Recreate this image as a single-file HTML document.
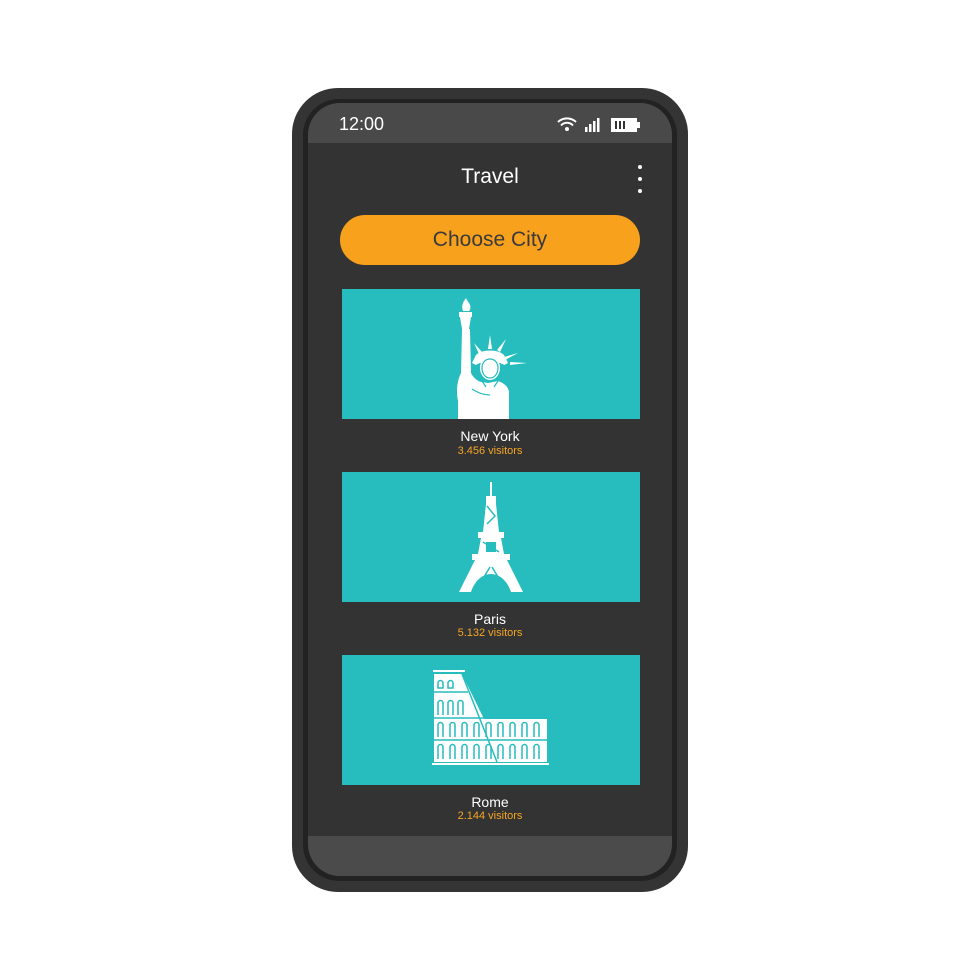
<!DOCTYPE html>
<html><head><meta charset="utf-8"><style>
body{margin:0;width:980px;height:980px;background:#fff;position:relative;font-family:"Liberation Sans",sans-serif;overflow:hidden}
.phone{position:absolute;left:292px;top:88px;width:396px;height:804px;background:#343434;border-radius:46px}
.rim{position:absolute;left:303px;top:99px;width:374px;height:782px;background:#222;border-radius:36px}
.screen{position:absolute;left:308px;top:103px;width:364px;height:773px;background:#333;border-radius:32px;overflow:hidden}
.status{position:absolute;left:0;top:0;width:364px;height:40px;background:#494949}
.bottom{position:absolute;left:0;bottom:0;width:364px;height:40px;background:#4b4b4b}
.t{position:absolute;color:#fff;text-align:center;width:364px;left:0}
.card{position:absolute;left:34px;width:298px;height:130px;background:#27bcbe}
.name{position:absolute;left:0;width:364px;text-align:center;color:#fff;font-size:14px}
.vis{position:absolute;left:0;width:364px;text-align:center;color:#f5a623;font-size:11px}
</style></head><body>
<div class="phone"></div><div class="rim"></div>
<div class="screen">
<div class="status"></div>
<div style="position:absolute;left:31px;top:11px;color:#fff;font-size:18px">12:00</div>
<svg style="position:absolute;left:248px;top:12px" width="86" height="20" viewBox="0 0 86 20">
<g fill="none" stroke="#fff" stroke-width="2"><path d="M2 7a13 13 0 0 1 18 0"/><path d="M5 10.5a8 8 0 0 1 12 0"/></g><circle cx="11" cy="14" r="2" fill="#fff"/>
<rect x="29" y="12" width="2.5" height="5" fill="#fff"/><rect x="33" y="9" width="2.5" height="8" fill="#fff"/><rect x="37" y="6" width="2.5" height="11" fill="#fff"/><rect x="41" y="3" width="2.5" height="14" fill="#fff"/>
<rect x="55" y="3" width="26" height="14" fill="#fff"/><rect x="81" y="7" width="3" height="6" fill="#fff"/>
<rect x="59" y="6" width="2" height="8" fill="#333"/><rect x="63" y="6" width="2" height="8" fill="#333"/><rect x="67" y="6" width="2" height="8" fill="#333"/>
</svg>
<div class="t" style="top:62px;font-size:21px">Travel</div>
<div style="position:absolute;left:330px;top:62px;width:4px;height:4px;border-radius:50%;background:#fff"></div>
<div style="position:absolute;left:330px;top:74px;width:4px;height:4px;border-radius:50%;background:#fff"></div>
<div style="position:absolute;left:330px;top:86px;width:4px;height:4px;border-radius:50%;background:#fff"></div>
<div style="position:absolute;left:32px;top:112px;width:300px;height:50px;border-radius:25px;background:#f8a11d;color:#3a3a3a;font-size:21px;text-align:center;line-height:50px">Choose City</div>

<div class="card" style="top:186px"><svg width="298" height="130" viewBox="0 0 298 130"><g fill="#fff">
<path d="M121 22c-2-5 0-9 3-13 1 3 3 4 4 7 1 3 0 5-1 6z"/><rect x="117" y="23" width="13" height="5"/><path d="M118 28h11l-2 12h-7z"/>
<path d="M120 40h8l1 44h-10z"/>
<path d="M148 46l2 14-4 0zM132 54l8 9-3 2zM164 50l-6 13-3-2zM176 64l-13 7-1-3zM185 74l-17 2 0-3z"/>
<path d="M134 66c6-6 22-6 28 0l4 8-4 2c-4-4-24-4-28 0l-4-2z"/>
<path d="M148 68c7 0 10 5 10 11s-4 12-10 12-10-6-10-12 3-11 10-11z"/>
<path d="M119 84h10c3 6 8 9 11 9l6 1 10-2c6 2 11 6 11 12v26h-51v-18c-2-10-1-20 3-28z"/>
</g>
<path d="M148 70c5 0 8 4 8 9s-3 10-8 10-8-5-8-10 3-9 8-9z" fill="none" stroke="#27bcbe" stroke-width="1.2"/>
<path d="M140 92l4 6M156 92l-4 6M130 100c6 4 12 6 18 6" fill="none" stroke="#27bcbe" stroke-width="1.2"/></svg></div>
<div class="name" style="top:325px">New York</div><div class="vis" style="top:342px">3.456 visitors</div>

<div class="card" style="top:369px"><svg width="298" height="130" viewBox="0 0 298 130"><g fill="#fff">
<rect x="148" y="10" width="2" height="14"/><path d="M144 24h10v8h-10z"/><path d="M144 32h10l3 28h-16z"/>
<rect x="136" y="60" width="26" height="6"/><path d="M139 66h20l3 16h-26z"/><rect x="130" y="82" width="38" height="6"/>
<path d="M133 88h32l16 32h-12c-4-12-12-18-20-18s-16 6-20 18h-12z"/></g>
<g stroke="#27bcbe" stroke-width="1.5" fill="none"><path d="M145 34l8 10-8 8M141 70l16 10M148 95l-12 20M150 95l12 20"/></g>
<rect x="144" y="70" width="10" height="10" fill="#27bcbe"/></svg></div>
<div class="name" style="top:508px">Paris</div><div class="vis" style="top:524px">5.132 visitors</div>

<div class="card" style="top:552px"><svg width="298" height="130" viewBox="0 0 298 130"><g fill="#fff">
<rect x="91" y="15" width="32" height="2"/><path d="M92 19h28l22 45h63v43h-113z"/><rect x="90" y="108" width="117" height="2"/></g>
<g fill="none" stroke="#27bcbe" stroke-width="1.5"><path d="M92 37h34M92 63h113M92 85h113M120 19l35 88"/>
<path d="M96 33v-5a2.5 2.5 0 0 1 5 0v5zM106 33v-5a2.5 2.5 0 0 1 5 0v5z"/>
<path d="M96 60v-12a2.5 2.5 0 0 1 5 0v12M106 60v-12a2.5 2.5 0 0 1 5 0v12M116 60v-12a2.5 2.5 0 0 1 5 0v12"/>
<path d="M96 82v-12a2.5 2.5 0 0 1 5 0v12M108 82v-12a2.5 2.5 0 0 1 5 0v12M120 82v-12a2.5 2.5 0 0 1 5 0v12M132 82v-12a2.5 2.5 0 0 1 5 0v12M144 82v-12a2.5 2.5 0 0 1 5 0v12M156 82v-12a2.5 2.5 0 0 1 5 0v12M168 82v-12a2.5 2.5 0 0 1 5 0v12M180 82v-12a2.5 2.5 0 0 1 5 0v12M192 82v-12a2.5 2.5 0 0 1 5 0v12"/>
<path d="M96 104v-12a2.5 2.5 0 0 1 5 0v12M108 104v-12a2.5 2.5 0 0 1 5 0v12M120 104v-12a2.5 2.5 0 0 1 5 0v12M132 104v-12a2.5 2.5 0 0 1 5 0v12M144 104v-12a2.5 2.5 0 0 1 5 0v12M156 104v-12a2.5 2.5 0 0 1 5 0v12M168 104v-12a2.5 2.5 0 0 1 5 0v12M180 104v-12a2.5 2.5 0 0 1 5 0v12M192 104v-12a2.5 2.5 0 0 1 5 0v12"/></g></svg></div>
<div class="name" style="top:691px">Rome</div><div class="vis" style="top:707px">2.144 visitors</div>

<div class="bottom"></div>
</div>
</body></html>
